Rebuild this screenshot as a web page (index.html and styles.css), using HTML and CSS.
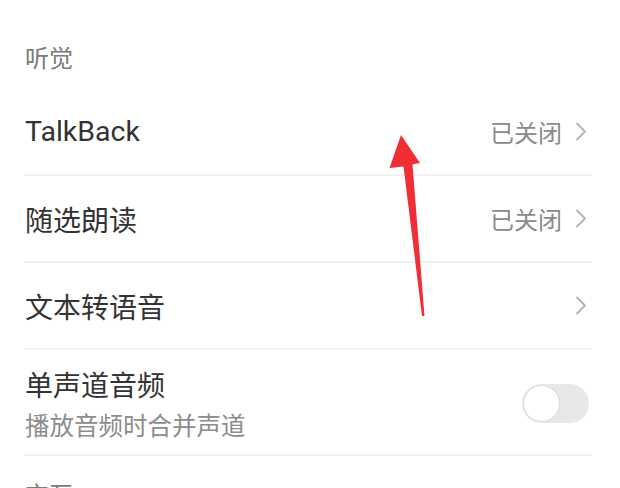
FILE: index.html
```html
<!DOCTYPE html>
<html lang="zh-CN">
<head>
<meta charset="utf-8">
<link rel="stylesheet" href="styles.css">
</head>
<body>
<div class="page">
  <div class="section-title">听觉</div>
  <div class="list">
    <div class="row">
      <span class="label latin">TalkBack</span>
      <span class="value">已关闭</span>
      <svg class="chev" width="12" height="19" viewBox="0 0 12 19"><path d="M2 1.5 L10 9.5 L2 17.5" fill="none" stroke="#b3b3b3" stroke-width="1.8" stroke-linecap="round" stroke-linejoin="round"/></svg>
    </div>
    <div class="row">
      <span class="label">随选朗读</span>
      <span class="value">已关闭</span>
      <svg class="chev" width="12" height="19" viewBox="0 0 12 19"><path d="M2 1.5 L10 9.5 L2 17.5" fill="none" stroke="#b3b3b3" stroke-width="1.8" stroke-linecap="round" stroke-linejoin="round"/></svg>
    </div>
    <div class="row">
      <span class="label">文本转语音</span>
      <svg class="chev" width="12" height="19" viewBox="0 0 12 19"><path d="M2 1.5 L10 9.5 L2 17.5" fill="none" stroke="#b3b3b3" stroke-width="1.8" stroke-linecap="round" stroke-linejoin="round"/></svg>
    </div>
    <div class="row row-tall">
      <div class="texts">
        <span class="label">单声道音频</span>
        <span class="sub">播放音频时合并声道</span>
      </div>
      <span class="toggle"><span class="knob"></span></span>
    </div>
  </div>
  <div class="section-title next">交互</div>
  <svg class="arrow" width="620" height="488" viewBox="0 0 620 488">
    <polygon points="401,135 420,163 412.5,164.5 424.5,316 422,316 403.5,166.5 389.5,168" fill="#ef2e36"/>
  </svg>
</div>
</body>
</html>
```
FILE: styles.css
```css
html, body {
  margin: 0;
  padding: 0;
  background: #ffffff;
}
body {
  font-family: Roboto, "Noto Sans CJK SC", "Noto Sans", sans-serif;
  color: #333333;
  width: 620px;
  height: 488px;
  overflow: hidden;
}
.page {
  position: relative;
  width: 620px;
  height: 488px;
  overflow: hidden;
}
.section-title {
  height: 89px;
  box-sizing: border-box;
  padding: 41px 0 0 25px;
  font-size: 24px;
  line-height: 32px;
  color: #7a7a7a;
  font-family: "Noto Sans CJK SC", sans-serif;
}
.section-title.next {
  padding-top: 22px;
}
.list {
  padding: 0 28px 0 24px;
}
.row {
  display: flex;
  align-items: center;
  height: 87px;
  box-sizing: border-box;
  border-bottom: 2px solid #f1f1f1;
  padding-left: 1px;
}
.row-tall {
  height: 106px;
  align-items: flex-start;
  padding-top: 16px;
}
.label {
  font-size: 28px;
  line-height: 36px;
  color: #333333;
  font-family: "Noto Sans CJK SC", sans-serif;
}
.label.latin {
  font-family: Roboto, "Noto Sans CJK SC", sans-serif;
  font-size: 28.5px;
}
.value {
  margin-left: auto;
  font-size: 24px;
  line-height: 32px;
  color: #8a8a8a;
  font-family: "Noto Sans CJK SC", sans-serif;
}
.chev {
  margin-left: 13px;
  margin-right: 5px;
  flex: none;
}
.row .label + .chev {
  margin-left: auto;
}
.texts {
  display: flex;
  flex-direction: column;
  gap: 7px;
}
.sub {
  font-size: 24.5px;
  line-height: 32px;
  color: #8c8c8c;
  font-family: "Noto Sans CJK SC", sans-serif;
}
.toggle {
  margin-left: auto;
  margin-right: 3px;
  align-self: center;
  margin-top: -14px;
  width: 67px;
  height: 39px;
  border-radius: 20px;
  background: #e8e8e8;
  display: flex;
  align-items: center;
  padding: 1px;
  box-sizing: border-box;
}
.knob {
  width: 37px;
  height: 37px;
  border-radius: 50%;
  background: #ffffff;
  box-sizing: border-box;
  border: 1px solid #dcdcdc;
  box-shadow: 0 0 1px rgba(0,0,0,0.08);
}
.arrow {
  position: absolute;
  left: 0;
  top: 0;
  pointer-events: none;
}
```
